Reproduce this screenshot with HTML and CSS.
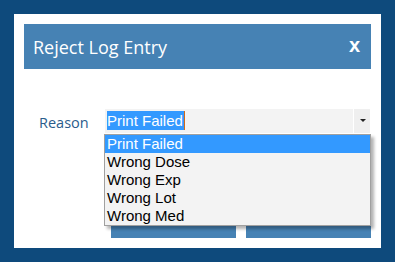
FILE: index.html
```html
<!DOCTYPE html>
<html lang="en">
<head>
  <meta charset="UTF-8">
  <title>Reject Log Entry</title>
  <link rel="stylesheet" href="styles.css">
</head>
<body>
  <div class="dialog">
    <div class="dialog-header">
      <span class="dialog-title">Reject Log Entry</span>
      <span class="close-btn">x</span>
    </div>

    <div class="form-row">
      <label class="field-label">Reason</label>
      <div class="select-wrap">
        <div class="select-box">
          <span class="select-value"><span class="selected-text">Print Failed</span></span>
          <span class="select-arrow"></span>
        </div>
        <ul class="option-list">
          <li class="option active">Print Failed</li>
          <li class="option">Wrong Dose</li>
          <li class="option">Wrong Exp</li>
          <li class="option">Wrong Lot</li>
          <li class="option">Wrong Med</li>
        </ul>
      </div>
    </div>

    <div class="form-actions">
      <button class="btn"></button>
      <button class="btn"></button>
    </div>
  </div>
</body>
</html>
```

FILE: styles.css
```css
html, body {
  height: 100%;
}
body {
  margin: 0;
  padding: 14px;
  box-sizing: border-box;
  background: #0e4a7c;
  font-family: 'Open Sans', 'Liberation Sans', sans-serif;
}
.dialog {
  background: #fff;
  padding: 10px;
  height: 234px;
  box-sizing: border-box;
  display: flex;
  flex-direction: column;
}
.dialog-header {
  background: #4682b4;
  color: #fff;
  height: 45px;
  display: flex;
  align-items: center;
  justify-content: space-between;
  padding: 0 11px 0 9px;
  flex-shrink: 0;
}
.dialog-title {
  font-size: 18px;
  line-height: 1;
  margin-top: 1px;
}
.close-btn {
  font-family: 'Liberation Sans', sans-serif;
  font-weight: bold;
  font-size: 20px;
  line-height: 1;
  margin-top: -3px;
}
.form-row {
  display: flex;
  align-items: center;
  margin-top: 40px;
}
.field-label {
  width: 66px;
  padding-left: 15px;
  font-size: 14.5px;
  color: #2b5c8c;
  margin-top: 2px;
}
.select-wrap {
  position: relative;
}
.select-box {
  width: 265px;
  height: 24px;
  display: flex;
  background: #f3f3f3;
}
.select-value {
  flex: 1;
  padding: 2px 0 0 2px;
  font-family: 'Liberation Sans', sans-serif;
  font-size: 15px;
  line-height: 19px;
}
.selected-text {
  background: #3399ff;
  color: #fff;
  display: inline-block;
  padding-right: 1px;
  border-right: 1px solid #d06a1a;
}
.select-arrow {
  width: 16px;
  border-left: 1px solid #fff;
  background: #efefef;
  position: relative;
}
.select-arrow::after {
  content: "";
  position: absolute;
  left: 6px;
  top: 10px;
  border-left: 3px solid transparent;
  border-right: 3px solid transparent;
  border-top: 3px solid #222;
}
.option-list {
  position: absolute;
  left: -1px;
  top: 25px;
  width: 265px;
  margin: 0;
  padding: 0;
  list-style: none;
  background: #f3f3f3;
  border: 1px solid #a0a0a0;
  box-shadow: 3px 3px 3px rgba(0, 0, 0, 0.3);
  z-index: 10;
}
.option {
  height: 18px;
  line-height: 18px;
  padding-left: 2px;
  font-family: 'Liberation Sans', sans-serif;
  font-size: 15px;
  color: #000;
}
.option.active {
  background: #3399ff;
  color: #fff;
}
.form-actions {
  margin-top: auto;
  display: flex;
  justify-content: flex-end;
  gap: 10px;
}
.btn {
  width: 125px;
  height: 30px;
  border: none;
  background: #4682b4;
  padding: 0;
}
```
